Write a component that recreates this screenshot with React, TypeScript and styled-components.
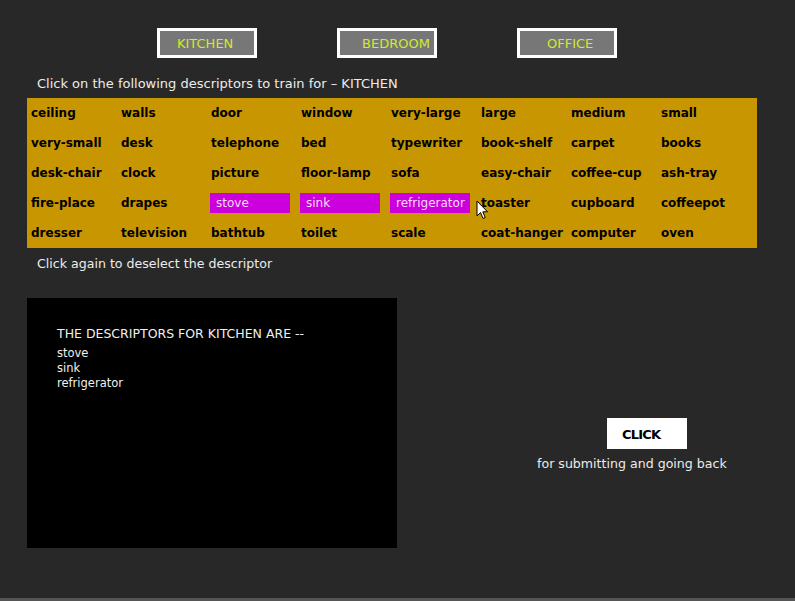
import React from "react";
import styled, { createGlobalStyle } from "styled-components";

const Global = createGlobalStyle`
  html, body { margin: 0; padding: 0; background: #282828; }
  * { box-sizing: border-box; }
`;

const Page = styled.div`
  position: relative;
  width: 795px;
  height: 601px;
  background: #282828;
  border-bottom: 3px solid #555555;
  font-family: "DejaVu Sans", "Liberation Sans", sans-serif;
  overflow: hidden;
`;

const RoomBar = styled.div`
  display: flex;
  gap: 80px;
  padding: 28px 0 0 157px;
`;

const RoomButton = styled.button<{ $shift: number }>`
  width: 100px;
  height: 30px;
  background: #777777;
  border: 3px solid #ffffff;
  color: #d2ea2c;
  font-family: "DejaVu Sans", "Liberation Sans", sans-serif;
  font-size: 13px;
  padding: 0 0 0 ${(p) => p.$shift}px;
  text-align: left;
  cursor: pointer;
  line-height: 26px;
`;

const Note = styled.div<{ $top: number; $size: number }>`
  color: #ececec;
  font-size: ${(p) => p.$size}px;
  line-height: 16px;
  padding-left: 37px;
  margin-top: ${(p) => p.$top}px;
`;

const Panel = styled.div`
  margin: 6px 0 0 27px;
  width: 730px;
  height: 150px;
  background: #c89600;
  display: grid;
  grid-template-columns: repeat(8, 90px);
  grid-auto-rows: 30px;
  padding-left: 4px;
`;

const Cell = styled.div<{ $on: boolean }>`
  display: flex;
  align-items: center;
  font-size: 12px;
  font-weight: ${(p) => (p.$on ? "normal" : "bold")};
  color: #000000;
  white-space: nowrap;
  cursor: pointer;
  ${(p) =>
    p.$on &&
    `
    align-self: center;
    height: 20px;
    width: 80px;
    margin-left: -1px;
    padding-left: 6px;
    background: #cc00dd;
    color: #f6dcf6;
  `}
`;

const Lower = styled.div`
  display: flex;
  margin-top: 26px;
`;

const Output = styled.div`
  margin-left: 27px;
  width: 370px;
  height: 250px;
  background: #000000;
  padding: 28px 0 0 30px;
  color: #f0f0f0;
`;

const OutputTitle = styled.div`
  font-size: 12.5px;
  line-height: 16px;
  margin-bottom: 4px;
`;

const OutputLine = styled.div`
  font-size: 11.5px;
  line-height: 15px;
`;

const SubmitColumn = styled.div`
  display: flex;
  flex-direction: column;
  align-items: flex-start;
  padding: 120px 0 0 140px;
`;

const SubmitButton = styled.button`
  margin-left: 70px;
  width: 80px;
  height: 31px;
  background: #ffffff;
  border: none;
  color: #000000;
  font-family: "DejaVu Sans", "Liberation Sans", sans-serif;
  font-size: 13px;
  font-weight: bold;
  letter-spacing: -0.8px;
  text-align: left;
  padding: 2px 0 0 15px;
  cursor: pointer;
`;

const Caption = styled.div`
  margin-top: 6px;
  color: #ececec;
  font-size: 12.6px;
  line-height: 18px;
`;

const Pointer = styled.svg`
  position: absolute;
  left: 476px;
  top: 200px;
`;

const words = [
  "ceiling", "walls", "door", "window", "very-large", "large", "medium", "small",
  "very-small", "desk", "telephone", "bed", "typewriter", "book-shelf", "carpet", "books",
  "desk-chair", "clock", "picture", "floor-lamp", "sofa", "easy-chair", "coffee-cup", "ash-tray",
  "fire-place", "drapes", "stove", "sink", "refrigerator", "toaster", "cupboard", "coffeepot",
  "dresser", "television", "bathtub", "toilet", "scale", "coat-hanger", "computer", "oven",
];

const selected = ["stove", "sink", "refrigerator"];

const rooms = [
  { name: "KITCHEN", shift: 17 },
  { name: "BEDROOM", shift: 22 },
  { name: "OFFICE", shift: 27 },
];

export default function App() {
  return (
    <Page>
      <Global />
      <RoomBar>
        {rooms.map((r) => (
          <RoomButton key={r.name} $shift={r.shift}>
            {r.name}
          </RoomButton>
        ))}
      </RoomBar>
      <Note $top={18} $size={13}>
        Click on the following descriptors to train for – KITCHEN
      </Note>
      <Panel>
        {words.map((w) => (
          <Cell key={w} $on={selected.includes(w)}>
            {w}
          </Cell>
        ))}
      </Panel>
      <Note $top={8} $size={12.6}>
        Click again to deselect the descriptor
      </Note>
      <Lower>
        <Output>
          <OutputTitle>THE DESCRIPTORS FOR KITCHEN ARE --</OutputTitle>
          {selected.map((s) => (
            <OutputLine key={s}>{s}</OutputLine>
          ))}
        </Output>
        <SubmitColumn>
          <SubmitButton>CLICK</SubmitButton>
          <Caption>for submitting and going back</Caption>
        </SubmitColumn>
      </Lower>
      <Pointer width="13" height="20" viewBox="0 0 13 20">
        <path
          d="M1 1 L1 16 L4.5 12.5 L7 18.5 L9.2 17.6 L6.8 11.8 L11.5 11.8 Z"
          fill="#ffffff"
          stroke="#000000"
          strokeWidth="1"
          strokeLinejoin="round"
        />
      </Pointer>
    </Page>
  );
}
